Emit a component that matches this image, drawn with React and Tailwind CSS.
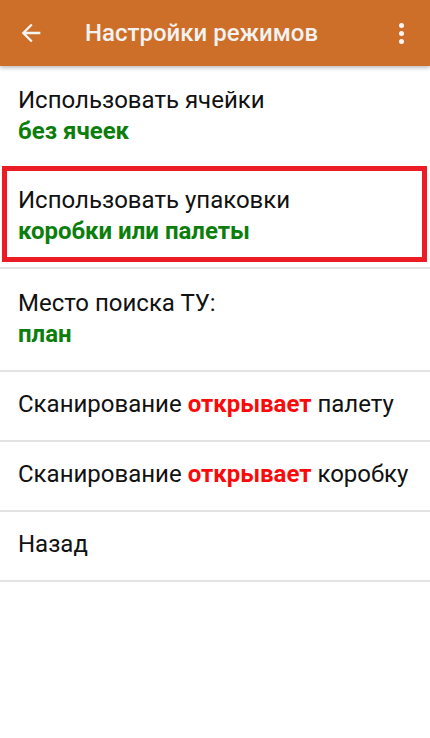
import React from 'react';

const font = { fontFamily: 'Roboto, "Noto Sans", sans-serif' };

function Row({ children, highlight }) {
  return (
    <div className="relative border-b-2 border-[#e3e3e3]">
      {children}
      {highlight && (
        <div className="pointer-events-none absolute left-[2px] right-[3px] top-0 bottom-[5px] border-[5px] border-[#ec1c24]" />
      )}
    </div>
  );
}

function TwoLine({ title, value }) {
  return (
    <div className="h-[101px] px-[18px] pt-[19px] text-[24px] leading-[31px]">
      <div className="text-[#111]">{title}</div>
      <div className="font-bold text-[#0b7e0b]">{value}</div>
    </div>
  );
}

function OneLine({ children }) {
  return <div className="h-[68px] px-[18px] pt-[17px] text-[24px] leading-[31px] text-[#111]">{children}</div>;
}

export default function App() {
  return (
    <div className="w-[430px] h-[738px] bg-white overflow-hidden" style={font}>
      <div className="relative z-10 h-[66px] bg-[#cd6f28] flex items-center shadow-[0_2px_4px_rgba(0,0,0,0.25)]">
        <svg viewBox="0 0 24 24" className="ml-[17px] w-[28px] h-[28px]" fill="#f5f5f5">
          <path d="M20 11H7.83l5.59-5.59L12 4l-8 8 8 8 1.41-1.41L7.83 13H20v-2z" />
        </svg>
        <div className="ml-[40px] text-[24px] font-medium text-[#f2f2f2]">Настройки режимов</div>
        <div className="ml-auto mr-[26px] flex flex-col gap-[3px]">
          <span className="block w-[5px] h-[5px] rounded-full bg-[#f5f5f5]" />
          <span className="block w-[5px] h-[5px] rounded-full bg-[#f5f5f5]" />
          <span className="block w-[5px] h-[5px] rounded-full bg-[#f5f5f5]" />
        </div>
      </div>

      <div>
        <div className="h-[100px] px-[18px] pt-[19px] text-[24px] leading-[31px]">
          <div className="text-[#111]">Использовать ячейки</div>
          <div className="font-bold text-[#0b7e0b]">без ячеек</div>
        </div>
        <Row highlight>
          <TwoLine title="Использовать упаковки" value="коробки или палеты" />
        </Row>
        <Row>
          <TwoLine title="Место поиска ТУ:" value="план" />
        </Row>
        <Row>
          <OneLine>
            Сканирование <span className="font-bold text-[#fa0a0a]">открывает</span> палету
          </OneLine>
        </Row>
        <Row>
          <OneLine>
            Сканирование <span className="font-bold text-[#fa0a0a]">открывает</span> коробку
          </OneLine>
        </Row>
        <Row>
          <OneLine>Назад</OneLine>
        </Row>
      </div>
    </div>
  );
}
